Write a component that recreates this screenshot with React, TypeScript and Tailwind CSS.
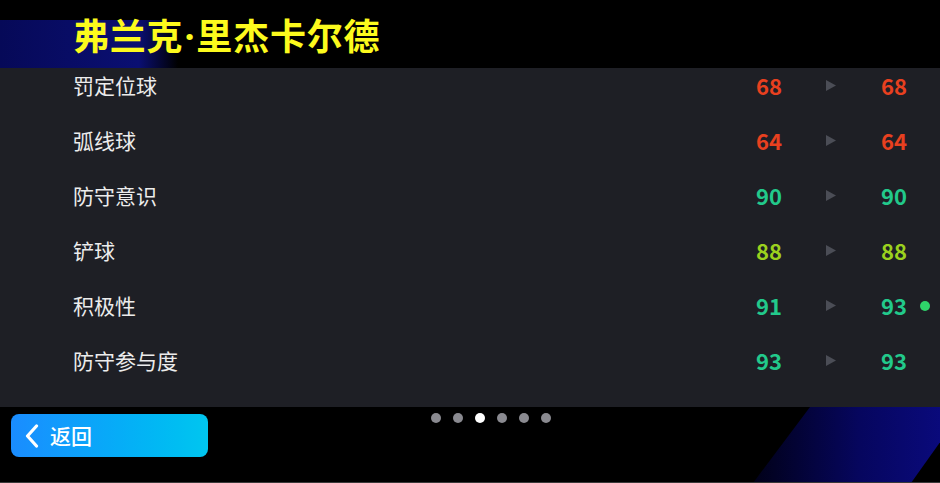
const rows = [
  { label: '罚定位球', from: 68, to: 68, color: 'text-[#e8401f]' },
  { label: '弧线球', from: 64, to: 64, color: 'text-[#e8401f]' },
  { label: '防守意识', from: 90, to: 90, color: 'text-[#22c98b]' },
  { label: '铲球', from: 88, to: 88, color: 'text-[#9bd11e]' },
  { label: '积极性', from: 91, to: 93, color: 'text-[#22c98b]', up: true },
  { label: '防守参与度', from: 93, to: 93, color: 'text-[#22c98b]' },
];

const font = { fontFamily: '"Noto Sans CJK SC", "Noto Sans", sans-serif' };

export default function App() {
  return (
    <div className="flex h-[483px] w-[940px] flex-col overflow-hidden bg-black" style={font}>
      <header className="relative flex h-[68px] shrink-0 items-center bg-black pl-[73px] pt-[2px]">
        <div className="absolute left-0 top-[20px] h-[48px] w-[178px] bg-[linear-gradient(90deg,#060958_0%,#0a0f72_78%,transparent_100%)]" />
        <h1 className="relative text-[36px] font-bold leading-none tracking-[0.8px] text-[#fcfa1d]">
          弗兰克<span className="px-[1px] font-['Noto_Sans',sans-serif]">·</span>里杰卡尔德
        </h1>
      </header>

      <section className="h-[339px] shrink-0 overflow-hidden bg-[#1e1f25]">
        <div className="-mt-[10px]">
          {rows.map((r) => (
            <div key={r.label} className="flex h-[55px] items-center">
              <div className="flex-1 pl-[73px] text-[21px] text-[#ececec]">{r.label}</div>
              <div className={`w-[50px] text-center text-[22px] font-semibold ${r.color}`}>{r.from}</div>
              <div className="flex w-[74px] justify-center">
                <svg width="10" height="11" viewBox="0 0 10 11">
                  <path d="M0 0 L10 5.5 L0 11 Z" fill="#4b4d56" />
                </svg>
              </div>
              <div className={`w-[52px] text-center text-[22px] font-semibold ${r.color}`}>{r.to}</div>
              <div className="flex w-[10px] justify-center">
                {r.up && <span className="h-[10px] w-[10px] rounded-full bg-[#2fd36a]" />}
              </div>
              <div className="w-[10px]" />
            </div>
          ))}
        </div>
      </section>

      <footer className="relative flex-1 bg-black pl-[11px] pt-[7px]">
        <svg className="absolute bottom-0 right-0" width="190" height="76" viewBox="750 0 190 76">
          <defs>
            <linearGradient id="stripe" x1="0" y1="0" x2="1" y2="0">
              <stop offset="0" stopColor="#010118" />
              <stop offset="0.5" stopColor="#06065e" />
              <stop offset="1" stopColor="#0b0b84" />
            </linearGradient>
          </defs>
          <polygon points="810,0 965,0 911,76 753,76" fill="url(#stripe)" />
        </svg>

        <button className="relative flex h-[43px] w-[197px] items-center gap-[11px] rounded-[8px] bg-gradient-to-r from-[#1a8cff] to-[#00c6ef] pl-[14px] text-[21px] font-medium text-white">
          <svg width="14" height="24" viewBox="0 0 14 24" fill="none">
            <path d="M11.5 2 L2.5 12 L11.5 22" stroke="white" strokeWidth="3.2" strokeLinecap="round" strokeLinejoin="round" />
          </svg>
          返回
        </button>

        <div className="absolute left-[431px] top-[6px] flex gap-[12px]">
          {[0, 1, 2, 3, 4, 5].map((i) => (
            <span
              key={i}
              className={`h-[10px] w-[10px] rounded-full ${i === 2 ? 'bg-white' : 'bg-[#8a8a90]'}`}
            />
          ))}
        </div>

        <div className="absolute bottom-0 left-0 h-[1px] w-full bg-[#3a3a3a]" />
      </footer>
    </div>
  );
}
